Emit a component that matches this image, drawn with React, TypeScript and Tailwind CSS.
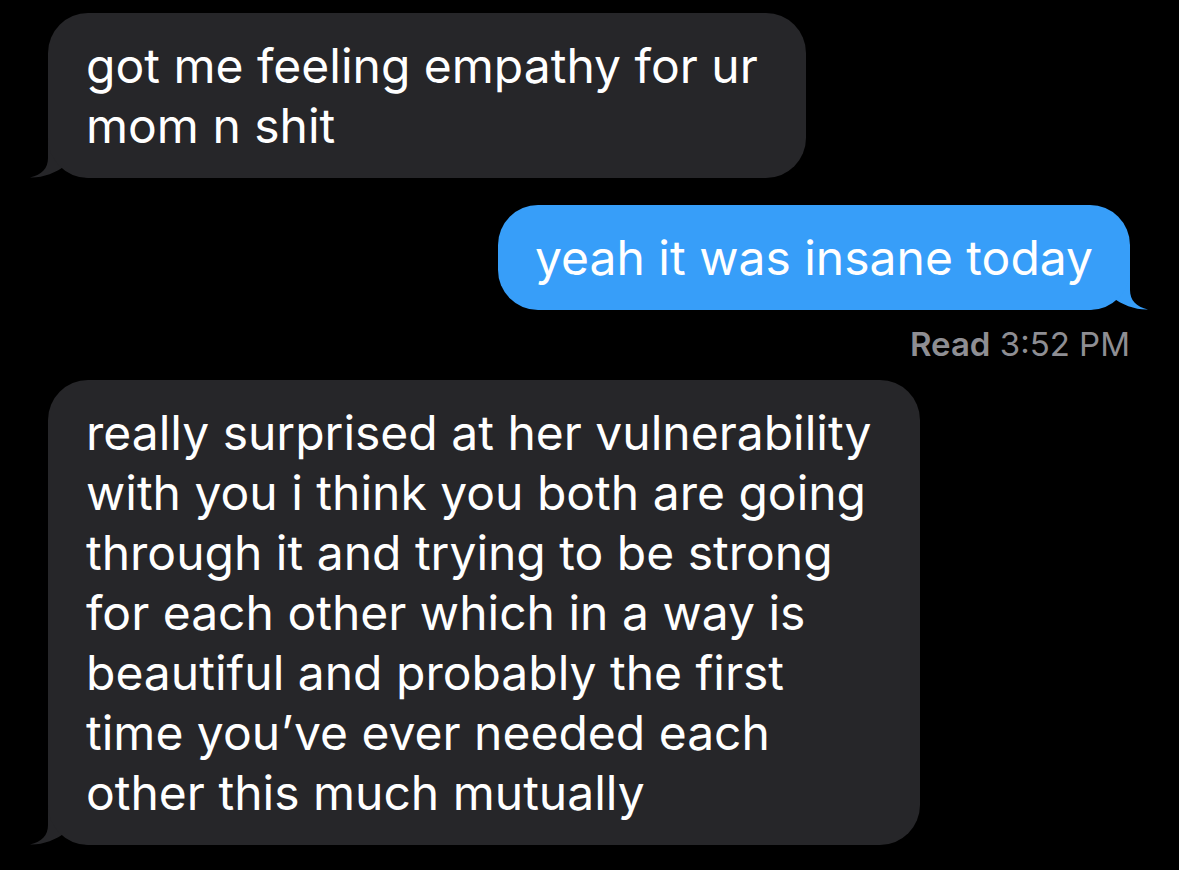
import React from "react";

const FONT = "font-['Inter','Roboto','Liberation_Sans',sans-serif]";

function Tail({ color, side }: { color: string; side: "left" | "right" }) {
  const pos = side === "left" ? "-left-[18px]" : "-right-[18px] -scale-x-100";
  return (
    <svg
      className={`absolute bottom-0 ${pos}`}
      width="70"
      height="40"
      viewBox="0 0 70 40"
    >
      <path
        d="M18 0 L18 20 C18 30 12 37 0 39.5 C12 40 26 35 36 27 C42 33 50 40 62 40 L70 40 L70 0 Z"
        fill={color}
      />
    </svg>
  );
}

function Bubble({
  lines,
  side,
}: {
  lines: string[];
  side: "left" | "right";
}) {
  const bg = side === "left" ? "#262629" : "#379ef9";
  return (
    <div className={`relative w-fit ${side === "right" ? "self-end" : "self-start"}`}>
      <Tail color={bg} side={side} />
      <div
        className={`relative rounded-[40px] py-[22.5px] text-[48px] leading-[60px] text-white whitespace-nowrap ${
          side === "left" ? "bg-[#262629] pl-[38px] pr-[48px]" : "bg-[#379ef9] pl-[37px] pr-[37px]"
        }`}
      >
        {lines.map((l, i) => (
          <div key={i}>{l}</div>
        ))}
      </div>
    </div>
  );
}

export default function App() {
  return (
    <div className={`w-[1179px] h-[870px] bg-black overflow-hidden ${FONT}`}>
      <div className="flex flex-col pl-[48px] pr-[49px] pt-[13px]">
        <Bubble side="left" lines={["got me feeling empathy for ur", "mom n shit"]} />
        <div className="h-[27px]" />
        <Bubble side="right" lines={["yeah it was insane today"]} />
        <div className="self-end pt-[15px] pb-[17px] text-[33px] leading-[38px] text-[#8e8e93]">
          <span className="font-semibold">Read</span> 3:52 PM
        </div>
        <Bubble
          side="left"
          lines={[
            "really surprised at her vulnerability",
            "with you i think you both are going",
            "through it and trying to be strong",
            "for each other which in a way is",
            "beautiful and probably the first",
            "time you’ve ever needed each",
            "other this much mutually",
          ]}
        />
      </div>
    </div>
  );
}
